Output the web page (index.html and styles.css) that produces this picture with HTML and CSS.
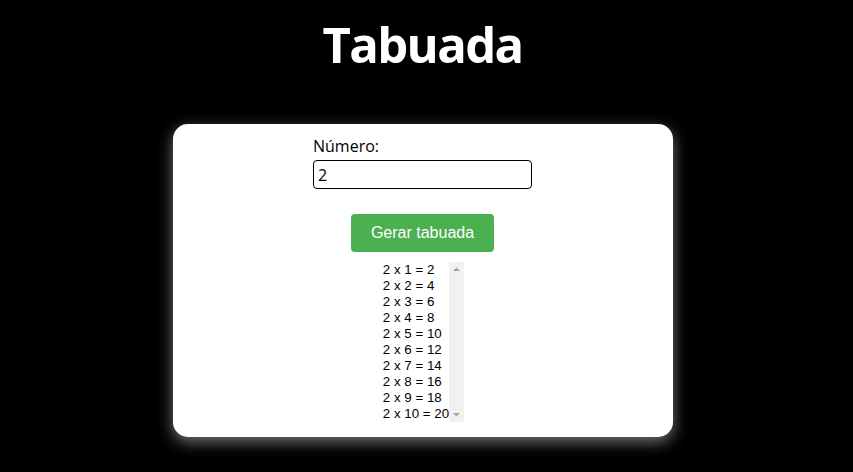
FILE: index.html
```
<!DOCTYPE html>
<html lang="pt">
<head>
<meta charset="utf-8">
<title>Tabuada</title>
<link rel="stylesheet" href="styles.css">
</head>
<body>
<h1 class="title">Tabuada</h1>
<main class="card">
  <div class="field">
    <label class="label" for="numero">Número:</label>
    <input class="input" id="numero" type="number" value="2">
  </div>
  <button class="btn" type="button">Gerar tabuada</button>
  <div class="result">
    <div class="options" role="listbox">
      <div class="option" role="option">2 x 1 = 2</div>
      <div class="option" role="option">2 x 2 = 4</div>
      <div class="option" role="option">2 x 3 = 6</div>
      <div class="option" role="option">2 x 4 = 8</div>
      <div class="option" role="option">2 x 5 = 10</div>
      <div class="option" role="option">2 x 6 = 12</div>
      <div class="option" role="option">2 x 7 = 14</div>
      <div class="option" role="option">2 x 8 = 16</div>
      <div class="option" role="option">2 x 9 = 18</div>
      <div class="option" role="option">2 x 10 = 20</div>
    </div>
    <div class="scrollbar" aria-hidden="true">
      <svg class="arrow" width="15" height="15" viewBox="0 0 15 15"><polygon points="4,9 11,9 7.5,5.5" fill="#a3a3a3"/></svg>
      <svg class="arrow" width="15" height="15" viewBox="0 0 15 15"><polygon points="4,6 11,6 7.5,9.5" fill="#a3a3a3"/></svg>
    </div>
  </div>
</main>
</body>
</html>
```
FILE: styles.css
```
html, body {
  margin: 0;
  padding: 0;
  background: #000;
}
body {
  font-family: "Open Sans", "DejaVu Sans", sans-serif;
  display: flex;
  flex-direction: column;
  align-items: center;
  min-height: 472px;
  padding-right: 8px;
}
.title {
  margin: 11px 0 0;
  color: #fff;
  font-size: 49px;
  font-weight: 700;
  letter-spacing: -1.6px;
  line-height: 67px;
  text-align: center;
}
.card {
  margin-top: 46px;
  width: 500px;
  height: 313px;
  box-sizing: border-box;
  background: #fff;
  border-radius: 15px;
  box-shadow: 0 5px 15px rgba(255, 255, 255, 0.45);
  padding-top: 11px;
  display: flex;
  flex-direction: column;
  align-items: center;
}
.field {
  display: flex;
  flex-direction: column;
  align-items: flex-start;
  gap: 3px;
}
.label {
  font-size: 16px;
  line-height: 22px;
  color: #000;
}
.input {
  box-sizing: border-box;
  width: 219px;
  height: 29px;
  padding: 0 4px;
  border: 1px solid #000;
  border-radius: 4px;
  font-family: "Open Sans", "DejaVu Sans", sans-serif;
  font-size: 16px;
  color: #000;
  background: #fff;
  outline: none;
  -moz-appearance: textfield;
}
.input::-webkit-outer-spin-button,
.input::-webkit-inner-spin-button {
  -webkit-appearance: none;
  margin: 0;
}
.btn {
  margin-top: 25px;
  padding: 10px 20px;
  border: none;
  border-radius: 4px;
  background: #4caf50;
  color: #fff;
  font-family: "Liberation Sans", Arial, sans-serif;
  font-size: 16px;
  line-height: 18px;
  cursor: pointer;
}
.result {
  margin-top: 10px;
  height: 160px;
  display: flex;
  background: #fff;
  font-family: "Liberation Sans", Arial, sans-serif;
  font-size: 13.333px;
  color: #000;
  white-space: nowrap;
}
.options {
  display: flex;
  flex-direction: column;
}
.option {
  padding: 0 0 0 2px;
  line-height: 16px;
  height: 16px;
}
.scrollbar {
  width: 15px;
  background: #f1f1f1;
  display: flex;
  flex-direction: column;
  justify-content: space-between;
}
.arrow {
  display: block;
}
```
